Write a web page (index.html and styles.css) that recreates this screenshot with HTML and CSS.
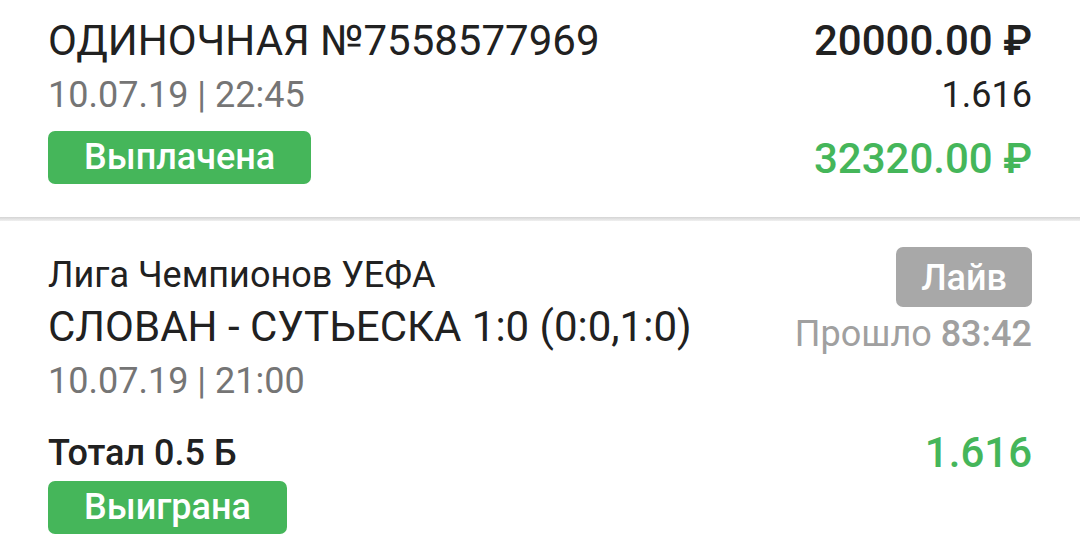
FILE: index.html
```html
<!DOCTYPE html>
<html lang="ru">

<head>
    <meta charset="UTF-8">
    <meta name="viewport" content="width=device-width, initial-scale=1.0">
    <link rel="stylesheet" href="styles.css">
    <title>Ставка</title>
</head>

<body>

    <div class="card bet-card">
        <div class="col-left">
            <div class="bet-title">ОДИНОЧНАЯ №7558577969</div>
            <div class="date bet-date">10.07.19 | 22:45</div>
            <div><span class="badge badge-green bet-badge">Выплачена</span></div>
        </div>
        <div class="col-right">
            <div class="bet-sum">20000.00 ₽</div>
            <div class="coef">1.616</div>
            <div class="bet-win">32320.00 ₽</div>
        </div>
    </div>

    <div class="divider"></div>

    <div class="card event-card">
        <div class="col-left">
            <div class="league">Лига Чемпионов УЕФА</div>
            <div class="match">СЛОВАН - СУТЬЕСКА 1:0 (0:0,1:0)</div>
            <div class="date event-date">10.07.19 | 21:00</div>
            <div class="outcome">Тотал 0.5 Б</div>
            <div><span class="badge badge-green outcome-badge">Выиграна</span></div>
        </div>
        <div class="col-right">
            <div><span class="badge badge-gray">Лайв</span></div>
            <div class="elapsed">Прошло <b>83:42</b></div>
            <div class="outcome-coef">1.616</div>
        </div>
    </div>

</body>

</html>
```

FILE: styles.css
```css
body {
    margin: 0;
    background-color: #fff;
    font-family: 'Roboto', sans-serif;
    color: #212121;
}

.card {
    display: flex;
    justify-content: space-between;
    padding-left: 48px;
    padding-right: 48px;
}

.col-left,
.col-right {
    display: flex;
    flex-direction: column;
}

.col-right {
    align-items: flex-end;
}

/* ставка */
.bet-card {
    padding-top: 16px;
    padding-bottom: 33px;
}

.bet-title {
    font-size: 42px;
    line-height: 50px;
}

.bet-sum {
    font-size: 42px;
    font-weight: 500;
    line-height: 50px;
}

.date {
    font-size: 36px;
    line-height: 42px;
    color: #757575;
}

.bet-date {
    margin-top: 8px;
}

.coef {
    font-size: 36px;
    line-height: 42px;
    margin-top: 8px;
}

.bet-badge {
    margin-top: 15px;
}

.bet-win {
    font-size: 42px;
    font-weight: 500;
    line-height: 50px;
    color: #45b65a;
    margin-top: 18px;
}

.badge {
    display: inline-block;
    border-radius: 7px;
    color: #fff;
    font-weight: 500;
    font-size: 36px;
    height: 53px;
    line-height: 53px;
    padding: 0 36px;
}

.badge-green {
    background-color: #45b65a;
}

.badge-gray {
    background-color: #a8a8a8;
    height: 60px;
    line-height: 58px;
    padding: 2px 25px 0;
    box-sizing: border-box;
}

.divider {
    height: 4px;
    background: linear-gradient(#d4d4d4, #f0f0f0);
}

/* событие */
.event-card {
    padding-top: 26px;
    padding-bottom: 20px;
}

.league {
    font-size: 36px;
    line-height: 42px;
    margin-top: 7px;
}

.match {
    font-size: 42px;
    line-height: 50px;
    margin-top: 6px;
}

.event-date {
    margin-top: 8px;
}

.outcome {
    font-size: 36px;
    font-weight: 500;
    line-height: 42px;
    margin-top: 30px;
}

.outcome-badge {
    margin-top: 7px;
}

.elapsed {
    font-size: 36px;
    line-height: 42px;
    color: #a0a0a0;
    margin-top: 6px;
}

.elapsed b {
    font-weight: 500;
}

.outcome-coef {
    font-size: 42px;
    font-weight: 500;
    line-height: 50px;
    color: #45b65a;
    margin-top: 73px;
}
```
